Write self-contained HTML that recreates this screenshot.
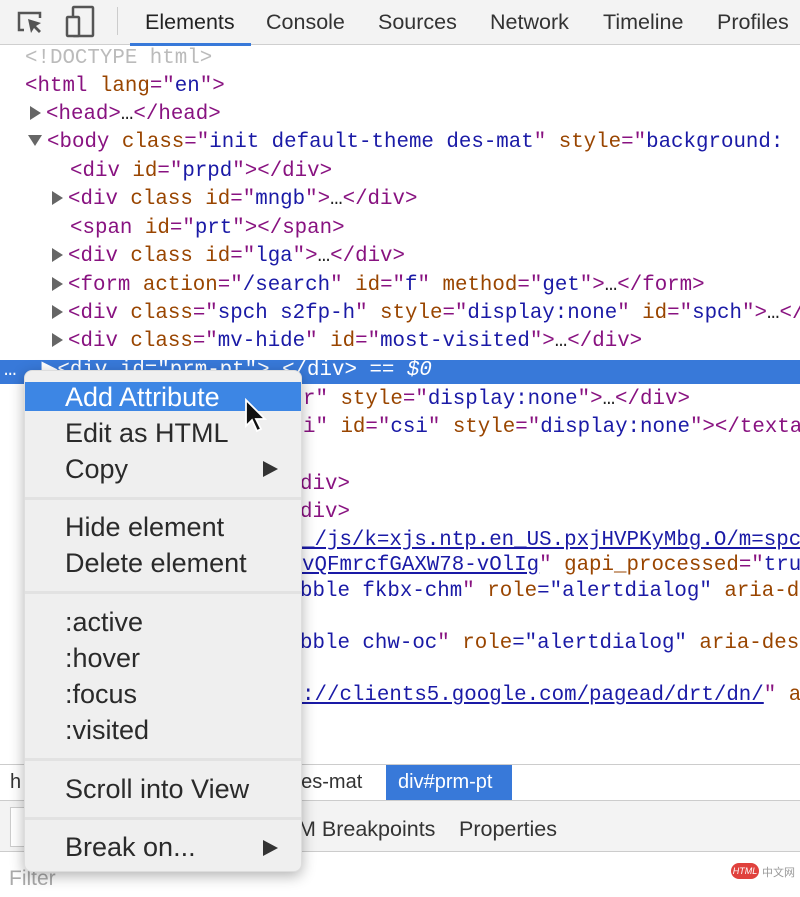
<!DOCTYPE html>
<html><head><style>
*{margin:0;padding:0;box-sizing:border-box}
body{width:800px;height:897px;overflow:hidden;background:#fff;position:relative;font-family:"Liberation Sans",sans-serif}
.tb{position:absolute;left:0;top:0;width:800px;height:45px;background:#f3f3f3;border-bottom:1px solid #cfcfcf}
.tab{position:absolute;top:10px;font-size:21.5px;color:#333}
.l{position:absolute;height:28px;line-height:28px;font-family:"Liberation Mono",monospace;font-size:20.8px;white-space:pre;color:#881280}
.a{color:#994500}.v{color:#1a1aa6}.g{color:#bbb}.k{color:#222}
.u{color:#1a1aa6;text-decoration:underline}
.tr{display:inline-block;width:0;height:0;border-left:11px solid #666;border-top:7px solid transparent;border-bottom:7px solid transparent;margin-right:5px;vertical-align:-1px}
.td{display:inline-block;width:0;height:0;border-top:11px solid #666;border-left:7px solid transparent;border-right:7px solid transparent;margin-right:5px;vertical-align:1px}
.menu{position:absolute;left:24px;top:370px;width:278px;height:502px;background:#efefef;border-radius:8px;box-shadow:0 4px 14px rgba(0,0,0,.3);border:1px solid #ddd}
.mi{position:absolute;left:40px;font-size:27px;color:#2a2a2a;line-height:30px}
.sep{position:absolute;left:0;width:276px;height:3px;background:#e2e2e2}
.sub{position:absolute;left:238px;width:0;height:0;border-left:15px solid #333;border-top:8px solid transparent;border-bottom:8px solid transparent}
</style></head><body>
<div class="tb">
<svg style="position:absolute;left:16px;top:8px" width="30" height="30" viewBox="0 0 30 30"><path d="M8 22H3V5h21v5" fill="none" stroke="#555" stroke-width="2.5"/><path d="M12 11l3 14 3-5 5 5 2-2-5-5 5-3z" fill="#555"/></svg>
<svg style="position:absolute;left:64px;top:5px" width="34" height="34" viewBox="0 0 34 34"><rect x="9" y="2" width="20" height="29" fill="none" stroke="#555" stroke-width="2.5" rx="1"/><rect x="3" y="12" width="12" height="19" fill="#f3f3f3" stroke="#555" stroke-width="2.5" rx="1"/></svg>
<div style="position:absolute;left:117px;top:7px;width:1px;height:28px;background:#ccc"></div>
<div class="tab" style="left:145px;color:#222">Elements</div>
<div style="position:absolute;left:130px;top:43px;width:121px;height:3px;background:#3879d9"></div>
<div class="tab" style="left:266px">Console</div>
<div class="tab" style="left:378px">Sources</div>
<div class="tab" style="left:490px">Network</div>
<div class="tab" style="left:603px">Timeline</div>
<div class="tab" style="left:717px">Profiles</div>
</div>

<div class="l g" style="left:25px;top:45px">&lt;!DOCTYPE html&gt;</div>
<div class="l" style="left:25px;top:73px">&lt;html <span class="a">lang</span>="<span class="v">en</span>"&gt;</div>
<div class="l" style="left:30px;top:101px"><span class="tr"></span>&lt;head&gt;<span class="k">…</span>&lt;/head&gt;</div>
<div class="l" style="left:28px;top:129px"><span class="td"></span>&lt;body <span class="a">class</span>="<span class="v">init default-theme des-mat</span>" <span class="a">style</span>="<span class="v">background: </span></div>
<div class="l" style="left:70px;top:158px">&lt;div <span class="a">id</span>="<span class="v">prpd</span>"&gt;&lt;/div&gt;</div>
<div class="l" style="left:52px;top:186px"><span class="tr"></span>&lt;div <span class="a">class id</span>="<span class="v">mngb</span>"&gt;<span class="k">…</span>&lt;/div&gt;</div>
<div class="l" style="left:70px;top:215px">&lt;span <span class="a">id</span>="<span class="v">prt</span>"&gt;&lt;/span&gt;</div>
<div class="l" style="left:52px;top:243px"><span class="tr"></span>&lt;div <span class="a">class id</span>="<span class="v">lga</span>"&gt;<span class="k">…</span>&lt;/div&gt;</div>
<div class="l" style="left:52px;top:272px"><span class="tr"></span>&lt;form <span class="a">action</span>="<span class="v">/search</span>" <span class="a">id</span>="<span class="v">f</span>" <span class="a">method</span>="<span class="v">get</span>"&gt;<span class="k">…</span>&lt;/form&gt;</div>
<div class="l" style="left:52px;top:300px"><span class="tr"></span>&lt;div <span class="a">class</span>="<span class="v">spch s2fp-h</span>" <span class="a">style</span>="<span class="v">display:none</span>" <span class="a">id</span>="<span class="v">spch</span>"&gt;<span class="k">…</span>&lt;/</div>
<div class="l" style="left:52px;top:328px"><span class="tr"></span>&lt;div <span class="a">class</span>="<span class="v">mv-hide</span>" <span class="a">id</span>="<span class="v">most-visited</span>"&gt;<span class="k">…</span>&lt;/div&gt;</div>
<div style="position:absolute;left:0;top:360px;width:800px;height:24px;background:#3879d9"></div>
<div class="l" style="left:4px;top:357px;color:#fff">…  ▶&lt;div id="prm-pt"&gt;…&lt;/div&gt; == <i>$0</i></div>
<div class="l" style="left:303px;top:386px">r" <span class="a">style</span>="<span class="v">display:none</span>"&gt;<span class="k">…</span>&lt;/div&gt;</div>
<div class="l" style="left:303px;top:414px">i" <span class="a">id</span>="<span class="v">csi</span>" <span class="a">style</span>="<span class="v">display:none</span>"&gt;&lt;/texta</div>
<div class="l" style="left:300px;top:471px">div&gt;</div>
<div class="l" style="left:300px;top:499px">div&gt;</div>
<div class="l u" style="left:302px;top:527px">_/js/k=xjs.ntp.en_US.pxjHVPKyMbg.O/m=spc</div>
<div class="l" style="left:302px;top:552px"><span class="u">vQFmrcfGAXW78-vOlIg</span>" <span class="a">gapi_processed</span>="<span class="v">tru</span></div>
<div class="l v" style="left:300px;top:578px">bble fkbx-chm<span style="color:#881280">"</span> <span class="a">role</span>="alertdialog" <span class="a">aria-de</span></div>
<div class="l v" style="left:300px;top:630px">bble chw-oc<span style="color:#881280">"</span> <span class="a">role</span>="alertdialog" <span class="a">aria-desc</span></div>
<div class="l" style="left:302px;top:682px"><span class="u">://clients5.google.com/pagead/drt/dn/</span>" <span class="a">a</span></div>

<div style="position:absolute;left:0;top:764px;width:800px;height:37px;background:#fff;border-top:1px solid #ccc;border-bottom:1px solid #ccc"></div>
<div style="position:absolute;left:10px;top:771px;font-size:20px;color:#333">h</div>
<div style="position:absolute;left:290px;top:771px;font-size:20px;color:#333">des-mat</div>
<div style="position:absolute;left:386px;top:765px;width:126px;height:35px;background:#3879d9;color:#fff;font-size:20px;padding:6px 0 0 12px">div#prm-pt</div>
<div style="position:absolute;left:0;top:801px;width:800px;height:51px;background:#f3f3f3;border-bottom:1px solid #ccc"></div>
<div style="position:absolute;left:10px;top:807px;width:30px;height:40px;border:1px solid #ccc;background:#fff"></div>
<div style="position:absolute;left:298px;top:817px;font-size:21.5px;color:#333">M Breakpoints</div>
<div style="position:absolute;left:459px;top:817px;font-size:21.5px;color:#333">Properties</div>
<div style="position:absolute;left:9px;top:867px;font-size:21px;color:#aaa">Filter</div>
<div style="position:absolute;left:731px;top:863px;width:28px;height:16px;border-radius:8px;background:#e0413d;color:#fff;font-size:9px;text-align:center;line-height:16px;font-style:italic">HTML</div>
<div style="position:absolute;left:762px;top:864px;font-size:11px;color:#999;font-family:'Liberation Sans','Noto Sans CJK SC',sans-serif">中文网</div>

<div class="menu">
<div style="position:absolute;left:0;top:11px;width:276px;height:29px;background:#3d86e4"></div>
<div class="mi" style="top:11px;color:#fff">Add Attribute</div>
<div class="mi" style="top:47px">Edit as HTML</div>
<div class="mi" style="top:83px">Copy</div><div class="sub" style="top:90px"></div>
<div class="sep" style="top:126px"></div>
<div class="mi" style="top:141px">Hide element</div>
<div class="mi" style="top:177px">Delete element</div>
<div class="sep" style="top:220px"></div>
<div class="mi" style="top:236px">:active</div>
<div class="mi" style="top:272px">:hover</div>
<div class="mi" style="top:308px">:focus</div>
<div class="mi" style="top:344px">:visited</div>
<div class="sep" style="top:387px"></div>
<div class="mi" style="top:403px">Scroll into View</div>
<div class="sep" style="top:446px"></div>
<div class="mi" style="top:461px">Break on...</div><div class="sub" style="top:469px"></div>
</div>
<svg style="position:absolute;left:243px;top:398px" width="26" height="36" viewBox="0 0 26 36"><path d="M3 2v26l6-6 5 11 4-2-5-10h9z" fill="#111" stroke="#fff" stroke-width="1.8"/></svg>
</body></html>
